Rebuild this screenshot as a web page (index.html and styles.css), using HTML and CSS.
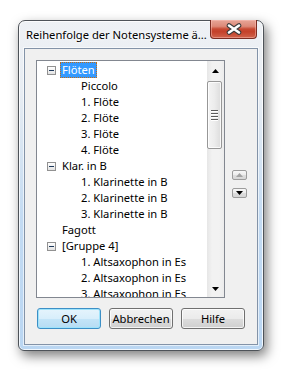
FILE: index.html
```html
<!DOCTYPE html>
<html>
<head>
<meta charset="utf-8">
<link rel="stylesheet" href="styles.css">
</head>
<body>
<div class="window">
  <div class="titlebar">
    <div class="title">Reihenfolge der Notensysteme ä...</div>
    <div class="close">
      <svg width="16" height="12" viewBox="0 0 16 12">
        <path d="M3 2.5 L13 9.5 M13 2.5 L3 9.5" stroke="#3b3b3b" stroke-width="4.6" stroke-linecap="round" fill="none"/>
        <path d="M3 2.5 L13 9.5 M13 2.5 L3 9.5" stroke="#ffffff" stroke-width="2.6" stroke-linecap="round" fill="none"/>
      </svg>
    </div>
  </div>
  <div class="content">
    <div class="main">
      <div class="tree">
        <div class="rows">
          <div class="row root"><span class="exp"></span><span class="lbl sel">Flöten</span></div>
          <div class="row child"><span class="lbl">Piccolo</span></div>
          <div class="row child"><span class="lbl">1. Flöte</span></div>
          <div class="row child"><span class="lbl">2. Flöte</span></div>
          <div class="row child"><span class="lbl">3. Flöte</span></div>
          <div class="row child"><span class="lbl">4. Flöte</span></div>
          <div class="row root"><span class="exp"></span><span class="lbl">Klar. in B</span></div>
          <div class="row child"><span class="lbl">1. Klarinette in B</span></div>
          <div class="row child"><span class="lbl">2. Klarinette in B</span></div>
          <div class="row child"><span class="lbl">3. Klarinette in B</span></div>
          <div class="row root"><span class="noexp"></span><span class="lbl">Fagott</span></div>
          <div class="row root"><span class="exp"></span><span class="lbl">[Gruppe 4]</span></div>
          <div class="row child"><span class="lbl">1. Altsaxophon in Es</span></div>
          <div class="row child"><span class="lbl">2. Altsaxophon in Es</span></div>
          <div class="row child"><span class="lbl">3. Altsaxophon in Es</span></div>
        </div>
        <div class="scrollbar">
          <div class="sb-btn">
            <svg width="7" height="4" viewBox="0 0 7 4"><path d="M0 4 L3.5 0 L7 4 Z" fill="#000"/></svg>
          </div>
          <div class="sb-track">
            <div class="thumb"><span class="grip"></span><span class="grip"></span><span class="grip"></span><span class="grip"></span></div>
          </div>
          <div class="sb-btn">
            <svg width="7" height="4" viewBox="0 0 7 4"><path d="M0 0 L7 0 L3.5 4 Z" fill="#000"/></svg>
          </div>
        </div>
      </div>
      <div class="side">
        <div class="mv">
          <svg width="7" height="4" viewBox="0 0 7 4"><path d="M0 4 L3.5 0 L7 4 Z" fill="#a3a3a3"/></svg>
        </div>
        <div class="mv">
          <svg width="7" height="4" viewBox="0 0 7 4"><path d="M0 0 L7 0 L3.5 4 Z" fill="#000"/></svg>
        </div>
      </div>
    </div>
    <div class="buttons">
      <button class="btn default">OK</button>
      <button class="btn">Abbrechen</button>
      <button class="btn">Hilfe</button>
    </div>
  </div>
</div>
</body>
</html>
```
FILE: styles.css
```css
* { box-sizing: border-box; }
html, body { margin: 0; padding: 0; background: #ffffff; }
body {
  font-family: "Noto Sans", "Open Sans", sans-serif;
  font-size: 11.2px;
  color: #000;
  width: 284px;
  height: 374px;
  overflow: hidden;
}
.window {
  margin: 20px 0 0 18px;
  width: 246px;
  height: 331px;
  border: 1px solid #4e5359;
  border-radius: 7px 7px 6px 6px;
  padding: 0 5px 5px;
  display: flex;
  flex-direction: column;
  background: linear-gradient(to bottom, #eef1f5 0, #e8edf3 22%, #d6e4f2 40%, #c3dbf3 60%, #bad6f2 100%);
  box-shadow: 3px 5px 12px rgba(0, 0, 0, .5), inset 0 0 0 1px rgba(255, 255, 255, .8);
}
.titlebar {
  height: 27px;
  display: flex;
  align-items: flex-start;
  justify-content: space-between;
}
.title {
  margin: 6px 0 0 2px;
  line-height: 15px;
  font-size: 11.2px;
  white-space: nowrap;
  text-shadow: 0 0 5px #fff, 0 0 3px #fff;
}
.close {
  width: 47px;
  height: 19px;
  margin-top: -1px;
  margin-right: 1px;
  border: 1px solid #7a2c22;
  border-top: none;
  border-radius: 0 0 4px 4px;
  background: linear-gradient(to bottom, #e7a597 0, #dd8a79 35%, #c84a33 50%, #c4412a 65%, #d0644c 100%);
  box-shadow: inset 0 0 0 1px rgba(255, 200, 190, .45);
  display: flex;
  align-items: center;
  justify-content: center;
}
.content {
  flex: 1;
  border: 1px solid #8393a8;
  background: #f0f0f0;
  padding: 11px 0 0 11px;
  display: flex;
  flex-direction: column;
  box-shadow: 0 0 0 1px rgba(255, 255, 255, .6);
}
.main { display: flex; }
.tree {
  width: 189px;
  height: 238px;
  border: 1px solid #828790;
  background: #fff;
  display: flex;
}
.rows {
  flex: 1;
  overflow: hidden;
  padding-top: 1px;
}
.row {
  height: 16px;
  display: flex;
  align-items: center;
  white-space: nowrap;
}
.root { padding-left: 10px; }
.child { padding-left: 42px; }
.exp {
  width: 9px;
  height: 9px;
  margin-right: 4px;
  border: 1px solid #919191;
  background: linear-gradient(to bottom, #ffffff, #e2e2e2);
  display: flex;
  align-items: center;
  justify-content: center;
  flex: none;
}
.exp::before {
  content: "";
  width: 5px;
  height: 1px;
  background: #1e395b;
}
.noexp { width: 9px; height: 9px; margin-right: 4px; flex: none; }
.lbl {
  height: 16px;
  line-height: 14px;
  padding: 0 1px;
  border: 1px solid transparent;
}
.lbl.sel {
  background: #3399ff;
  color: #fff;
  border: 1px dotted #c66a10;
}
.scrollbar {
  width: 17px;
  display: flex;
  flex-direction: column;
  background: linear-gradient(to right, #e6e6e6 0, #f2f2f2 30%, #f2f2f2 70%, #ececec 100%);
}
.sb-btn {
  height: 17px;
  display: flex;
  align-items: center;
  justify-content: center;
  flex: none;
}
.sb-btn:first-child { padding-top: 3px; }
.sb-track {
  flex: 1;
  padding-top: 3px;
}
.thumb {
  margin: 0 1px 0 0;
  width: 15px;
  height: 68px;
  border: 1px solid #979797;
  border-radius: 2px;
  background: linear-gradient(to right, #f4f4f4 0, #ececec 50%, #dcdcdc 100%);
  box-shadow: inset 0 0 0 1px rgba(255, 255, 255, .8);
  display: flex;
  flex-direction: column;
  align-items: center;
  justify-content: center;
  gap: 1px;
}
.grip {
  width: 7px;
  height: 1px;
  background: #5a5a5a;
  box-shadow: 0 1px 0 #fff;
  margin-bottom: 1px;
}
.side {
  margin: 110px 0 0 7px;
  display: flex;
  flex-direction: column;
  gap: 8px;
}
.mv {
  width: 15px;
  height: 10px;
  border: 1px solid #9c9c9c;
  border-radius: 2px;
  background: linear-gradient(to bottom, #f7f7f7 0, #ececec 50%, #dedede 51%, #d6d6d6 100%);
  display: flex;
  align-items: center;
  justify-content: center;
}
.buttons {
  display: flex;
  gap: 8px;
  margin-top: 10px;
  padding-left: 1px;
}
.btn {
  width: 64px;
  height: 21px;
  padding: 0;
  border: 1px solid #707070;
  border-radius: 3px;
  font-family: inherit;
  font-size: 11.2px;
  color: #000;
  background: linear-gradient(to bottom, #f2f2f2 0, #ebebeb 50%, #dddddd 50%, #cfcfcf 100%);
  box-shadow: inset 0 0 0 1px rgba(255, 255, 255, .75);
}
.btn.default {
  border-color: #3c8fc6;
  background: linear-gradient(to bottom, #e5f4fc 0, #d8eefb 50%, #c4e5f8 50%, #b6dcf3 100%);
  box-shadow: inset 0 0 0 1px #9ee3fb;
}
```
